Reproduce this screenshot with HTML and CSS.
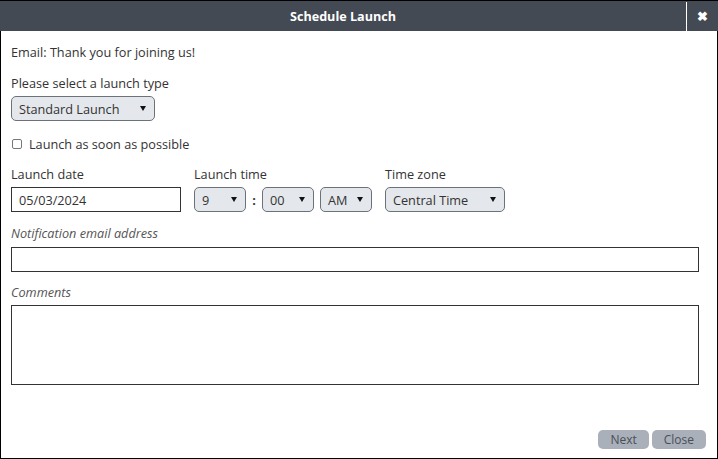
FILE: index.html
```html
<!DOCTYPE html>
<html lang="en">
<head>
    <meta charset="UTF-8">
    <meta name="viewport" content="width=device-width, initial-scale=1.0">
    <title>Schedule Launch</title>
    <link rel="stylesheet" href="styles.css">
</head>
<body>
    <div class="dialog">
        <!-- Title bar -->
        <header class="titlebar">
            <h1>Schedule Launch</h1>
            <button class="close-x" aria-label="Close">&#10006;</button>
        </header>
        <main class="content">
            <p class="intro">Email: Thank you for joining us!</p>

            <label class="field-label">Please select a launch type</label>
            <div class="select select-type"><span>Standard Launch</span><i class="caret"></i></div>

            <label class="check-row">
                <span class="checkbox"></span>
                Launch as soon as possible
            </label>

            <!-- Date / time row -->
            <div class="row">
                <div class="col">
                    <label class="field-label">Launch date</label>
                    <input type="text" class="text-input date-input" value="05/03/2024">
                </div>
                <div class="col">
                    <label class="field-label">Launch time</label>
                    <div class="time-group">
                        <div class="select select-hour"><span>9</span><i class="caret"></i></div>
                        <span class="colon">:</span>
                        <div class="select select-min"><span>00</span><i class="caret"></i></div>
                        <div class="select select-ampm"><span>AM</span><i class="caret"></i></div>
                    </div>
                </div>
                <div class="col">
                    <label class="field-label">Time zone</label>
                    <div class="select select-zone"><span>Central Time</span><i class="caret"></i></div>
                </div>
            </div>

            <label class="field-label italic">Notification email address</label>
            <input type="text" class="text-input wide-input">

            <label class="field-label italic comments-label">Comments</label>
            <textarea class="text-input comments"></textarea>
        </main>
        <footer class="buttons">
            <button class="btn">Next</button>
            <button class="btn">Close</button>
        </footer>
    </div>
</body>
</html>
```
FILE: styles.css
```css
* {
    margin: 0;
    padding: 0;
    box-sizing: border-box;
}

body {
    font-family: "Open Sans", Arial, sans-serif;
    font-size: 12.7px;
    color: #333;
    background-color: #fff;
}

.dialog {
    width: 718px;
    height: 459px;
    border: 1px solid #000;
    border-top: none;
    display: flex;
    flex-direction: column;
}

.titlebar {
    height: 31px;
    margin: 0 -1px;
    border-top: 1px solid #000;
    background-color: #434a54;
    display: flex;
    align-items: center;
    position: relative;
}

.titlebar h1 {
    flex: 1;
    text-align: center;
    font-size: 12.6px;
    font-weight: bold;
    color: #fff;
    padding-left: 0;
}

.close-x {
    width: 31px;
    height: 29px;
    margin-right: 1px;
    border: none;
    border-left: 1px solid #fff;
    background: transparent;
    color: #fff;
    font-size: 13px;
    font-weight: bold;
    cursor: pointer;
}

.content {
    flex: 1;
    padding: 12px 18px 0 10px;
}

.intro {
    margin-bottom: 13px;
    line-height: 18px;
}

.field-label {
    display: block;
    line-height: 18px;
    margin-bottom: 4px;
}

.italic {
    font-style: italic;
    color: #555;
    margin-bottom: 5px;
}

.comments-label {
    margin-bottom: 4px;
}

.select {
    display: flex;
    align-items: center;
    justify-content: space-between;
    height: 25px;
    padding: 0 8px 0 7px;
    background-color: #e4e7eb;
    border: 1px solid #6d7178;
    border-radius: 5px;
    color: #333;
}

.caret {
    width: 0;
    height: 0;
    border-left: 3px solid transparent;
    border-right: 3px solid transparent;
    border-top: 5px solid #111;
}

.select-type {
    width: 144px;
    margin-bottom: 14px;
}

.check-row {
    display: flex;
    align-items: center;
    gap: 7px;
    line-height: 18px;
    margin-bottom: 12px;
}

.checkbox {
    width: 10px;
    height: 10px;
    margin-left: 1px;
    border: 1px solid #777;
    border-radius: 2px;
    background: #fff;
}

.row {
    display: flex;
    margin-bottom: 12px;
}

.col {
    display: flex;
    flex-direction: column;
}

.col + .col {
    margin-left: 13px;
}

.col:last-child {
    margin-left: 13px;
}

.text-input {
    display: block;
    height: 25px;
    border: 1px solid #333;
    font-family: inherit;
    font-size: 12.7px;
    color: #333;
    padding: 0 7px;
    background: #fff;
}

.date-input {
    width: 170px;
}

.time-group {
    display: flex;
    align-items: center;
}

.select-hour {
    width: 52px;
}

.select-min {
    width: 52px;
}

.select-ampm {
    width: 52px;
    margin-left: 6px;
}

.colon {
    width: 16px;
    text-align: center;
    font-weight: bold;
}

.select-zone {
    width: 120px;
}

.wide-input {
    width: 688px;
    margin-bottom: 11px;
}

.comments {
    width: 688px;
    height: 80px;
    resize: none;
}

.buttons {
    display: flex;
    justify-content: flex-end;
    gap: 3px;
    padding: 0 11px 9px 0;
}

.btn {
    height: 19px;
    padding: 0 12px;
    border: none;
    border-radius: 5px;
    background-color: #a9b0ba;
    color: #4a4f57;
    font-family: inherit;
    font-size: 12px;
    cursor: pointer;
}
```
